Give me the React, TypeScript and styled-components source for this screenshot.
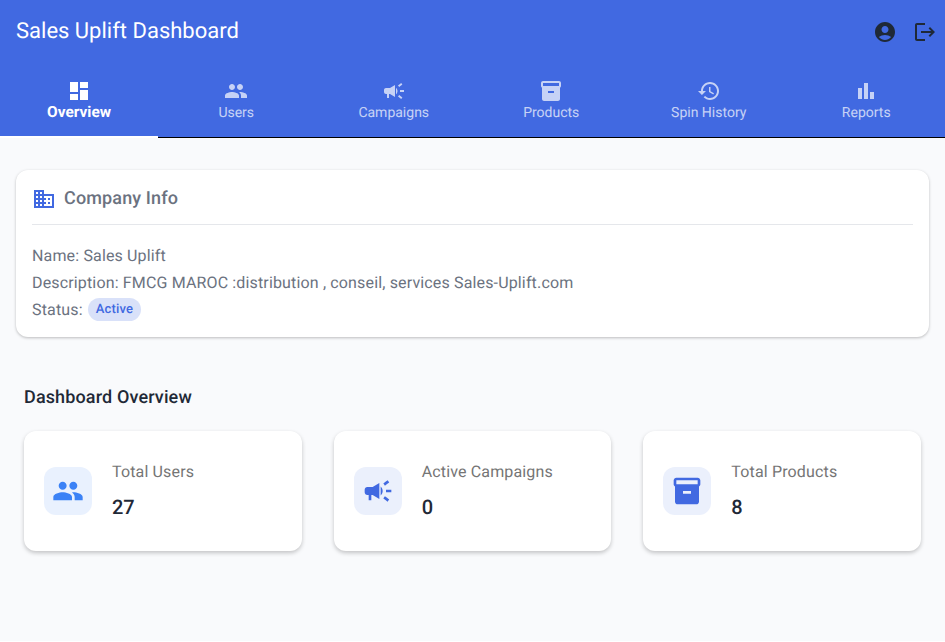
import styled, { createGlobalStyle } from "styled-components"

const GlobalStyle = createGlobalStyle`
  html, body {
    margin: 0;
    padding: 0;
    background: #ffffff;
    font-family: Roboto, "Liberation Sans", sans-serif;
    text-rendering: geometricPrecision;
  }
  * {
    box-sizing: border-box;
  }
`

const Page = styled.div`
  min-height: 641px;
  background: #f9fafc;
`

const Header = styled.header`
  background: #4169e1;
  height: 138px;
  border-bottom: 1px solid #000;
`

const TopBar = styled.div`
  height: 64px;
  padding: 0 8px 0 16px;
  display: flex;
  align-items: center;
  justify-content: space-between;
`

const Title = styled.h1`
  margin: 0;
  color: #fff;
  font-size: 22px;
  font-weight: 400;
  line-height: 1.2;
`

const TopActions = styled.div`
  display: flex;
  gap: 16px;
`

const ActionIcon = styled.svg`
  width: 24px;
  height: 24px;
  fill: #1f2937;
  display: block;
`

const Tabs = styled.nav`
  display: grid;
  grid-template-columns: repeat(6, 1fr);
  height: 73px;
`

const Tab = styled.div<{ $active?: boolean }>`
  height: 74px;
  padding-top: 15px;
  display: flex;
  flex-direction: column;
  align-items: center;
  color: #fff;
  border-bottom: 2px solid ${({ $active }) => ($active ? "#fff" : "transparent")};
  position: relative;
  z-index: 1;

  & > * {
    opacity: ${({ $active }) => ($active ? 1 : 0.7)};
  }
`

const TabIcon = styled.svg`
  width: 24px;
  height: 24px;
  fill: currentColor;
  display: block;
`

const TabLabel = styled.span<{ $active?: boolean }>`
  font-size: 14px;
  line-height: 20px;
  font-weight: ${({ $active }) => ($active ? 700 : 400)};
  transform: ${({ $active }) => ($active ? "scale(1.1)" : "none")};
`

const Content = styled.main`
  padding: 32px 16px 0;
`

const InfoCard = styled.section`
  background: #fff;
  border-radius: 12px;
  padding: 16px;
  height: 167px;
  box-shadow: 0 1px 3px rgba(0, 0, 0, 0.25);
`

const InfoHeading = styled.div`
  display: flex;
  align-items: center;
  gap: 8px;
  height: 39px;
  padding-bottom: 12px;
  border-bottom: 1px solid #e5e7eb;
`

const InfoIcon = styled.svg`
  width: 24px;
  height: 24px;
  fill: #4169e1;
`

const InfoTitle = styled.h2`
  margin: 0;
  font-size: 18px;
  font-weight: 500;
  line-height: 24px;
  letter-spacing: 0.135px;
  color: #6b7280;
`

const InfoBody = styled.div`
  padding-top: 17px;
  font-size: 16px;
  line-height: 27px;
  letter-spacing: 0.15px;
  color: #6b7280;
`

const Line = styled.div`
  height: 27px;
  display: flex;
  align-items: center;
  white-space: pre;
`

const Chip = styled.span`
  margin-left: 5px;
  height: 23px;
  padding: 0 8px;
  border-radius: 12px;
  background: rgba(65, 105, 225, 0.2);
  color: #4169e1;
  font-size: 13px;
  font-weight: 500;
  letter-spacing: 0.2px;
  display: inline-flex;
  align-items: center;
`

const Overview = styled.section`
  padding: 49px 8px 0;
`

const OverviewTitle = styled.h2`
  margin: 0 0 21px;
  font-size: 18px;
  font-weight: 500;
  line-height: 24px;
  letter-spacing: 0.135px;
  color: #1f2937;
`

const StatGrid = styled.div`
  display: grid;
  grid-template-columns: repeat(3, 1fr);
  gap: 32px;
`

const StatCard = styled.div`
  height: 120px;
  background: #fff;
  border-radius: 12px;
  padding: 0 20px;
  display: flex;
  align-items: center;
  gap: 20px;
  box-shadow: 0 2px 4px rgba(0, 0, 0, 0.22);
`

const StatBadge = styled.div<{ $color: string; $bg: string }>`
  width: 48px;
  height: 48px;
  border-radius: 12px;
  background: ${({ $bg }) => $bg};
  color: ${({ $color }) => $color};
  display: flex;
  align-items: center;
  justify-content: center;
`

const StatIcon = styled.svg`
  width: 32px;
  height: 32px;
  fill: currentColor;
`

const StatText = styled.div`
  display: flex;
  flex-direction: column;
  gap: 12px;
`

const StatLabel = styled.span`
  font-size: 16px;
  line-height: 20px;
  letter-spacing: 0.15px;
  color: #757575;
`

const StatValue = styled.span`
  font-size: 20px;
  font-weight: 500;
  line-height: 26px;
  color: #1f2937;
`

const paths = {
  dashboard: "M3 13h8V3H3v10zm0 8h8v-6H3v6zm10 0h8V11h-8v10zm0-18v6h8V3h-8z",
  people:
    "M16 11c1.66 0 2.99-1.34 2.99-3S17.66 5 16 5c-1.66 0-3 1.34-3 3s1.34 3 3 3zm-8 0c1.66 0 2.99-1.34 2.99-3S9.66 5 8 5C6.34 5 5 6.34 5 8s1.34 3 3 3zm0 2c-2.33 0-7 1.17-7 3.5V19h14v-2.5c0-2.33-4.67-3.5-7-3.5zm8 0c-.29 0-.62.02-.97.05 1.16.84 1.97 1.97 1.97 3.45V19h6v-2.5c0-2.33-4.67-3.5-7-3.5z",
  campaign:
    "M18 11v2h4v-2h-4zm-2 6.61c.96.71 2.21 1.65 3.2 2.39.4-.53.8-1.07 1.2-1.6-.99-.74-2.24-1.68-3.2-2.4-.4.54-.8 1.08-1.2 1.61zM20.4 5.6c-.4-.53-.8-1.07-1.2-1.6-.99.74-2.24 1.68-3.2 2.4.4.53.8 1.07 1.2 1.6.96-.72 2.21-1.65 3.2-2.4zM4 9c-1.1 0-2 .9-2 2v2c0 1.1.9 2 2 2h1v4h2v-4h1l5 3V6L8 9H4zm11.5 3c0-1.33-.58-2.53-1.5-3.35v6.69c.92-.81 1.5-2.01 1.5-3.34z",
  inventory:
    "M20 2H4c-1 0-2 .9-2 2v3.01c0 .72.43 1.34 1 1.69V20c0 1.1 1.1 2 2 2h14c.9 0 2-.9 2-2V8.7c.57-.35 1-.97 1-1.69V4c0-1.1-1-2-2-2zm-5 12H9v-2h6v2zm5-7H4V4l16-.02V7z",
  history:
    "M13 3c-4.97 0-9 4.03-9 9H1l3.89 3.89.07.14L9 12H6c0-3.87 3.13-7 7-7s7 3.13 7 7-3.13 7-7 7c-1.93 0-3.68-.79-4.94-2.06l-1.42 1.42C8.27 19.99 10.51 21 13 21c4.97 0 9-4.03 9-9s-4.03-9-9-9zm-1 5v5l4.28 2.54.72-1.21-3.5-2.08V8H12z",
  bar: "M4 9h4v11H4zm12 4h4v7h-4zm-6-9h4v16h-4z",
  account:
    "M12 2C6.48 2 2 6.48 2 12s4.48 10 10 10 10-4.48 10-10S17.52 2 12 2zm0 4c1.93 0 3.5 1.57 3.5 3.5S13.93 13 12 13s-3.5-1.57-3.5-3.5S10.07 6 12 6zm0 14c-2.03 0-4.43-.82-6.14-2.88C7.55 15.8 9.68 15 12 15s4.45.8 6.14 2.12C16.43 19.18 14.03 20 12 20z",
  logout:
    "M17 7l-1.41 1.41L18.17 11H8v2h10.17l-2.58 2.58L17 17l5-5zM4 5h8V3H4c-1.1 0-2 .9-2 2v14c0 1.1.9 2 2 2h8v-2H4V5z",
  business:
    "M12 7V3H2v18h20V7H12zM6 19H4v-2h2v2zm0-4H4v-2h2v2zm0-4H4V9h2v2zm0-4H4V5h2v2zm4 12H8v-2h2v2zm0-4H8v-2h2v2zm0-4H8V9h2v2zm0-4H8V5h2v2zm10 12h-8v-2h2v-2h-2v-2h2v-2h-2V9h8v10zm-2-8h-2v2h2v-2zm0 4h-2v2h2v-2z",
}

const tabs = [
  { label: "Overview", icon: paths.dashboard, active: true },
  { label: "Users", icon: paths.people },
  { label: "Campaigns", icon: paths.campaign },
  { label: "Products", icon: paths.inventory },
  { label: "Spin History", icon: paths.history },
  { label: "Reports", icon: paths.bar },
]

const stats = [
  { label: "Total Users", value: "27", icon: paths.people, color: "#3b82f6", bg: "#e9f1fe" },
  { label: "Active Campaigns", value: "0", icon: paths.campaign, color: "#4169e1", bg: "#ebf0fc" },
  { label: "Total Products", value: "8", icon: paths.inventory, color: "#4169e1", bg: "#ebf0fc" },
]

function App() {
  return (
    <Page>
      <GlobalStyle />
      <Header>
        <TopBar>
          <Title>Sales Uplift Dashboard</Title>
          <TopActions>
            <ActionIcon viewBox="0 0 24 24"><path d={paths.account} /></ActionIcon>
            <ActionIcon viewBox="0 0 24 24"><path d={paths.logout} /></ActionIcon>
          </TopActions>
        </TopBar>
        <Tabs>
          {tabs.map((tab) => (
            <Tab key={tab.label} $active={tab.active}>
              <TabIcon viewBox="0 0 24 24"><path d={tab.icon} /></TabIcon>
              <TabLabel $active={tab.active}>{tab.label}</TabLabel>
            </Tab>
          ))}
        </Tabs>
      </Header>
      <Content>
        <InfoCard>
          <InfoHeading>
            <InfoIcon viewBox="0 0 24 24"><path d={paths.business} /></InfoIcon>
            <InfoTitle>Company Info</InfoTitle>
          </InfoHeading>
          <InfoBody>
            <Line>Name: Sales Uplift</Line>
            <Line>Description: FMCG MAROC :distribution , conseil, services Sales-Uplift.com</Line>
            <Line>Status:<Chip>Active</Chip></Line>
          </InfoBody>
        </InfoCard>
        <Overview>
          <OverviewTitle>Dashboard Overview</OverviewTitle>
          <StatGrid>
            {stats.map((stat) => (
              <StatCard key={stat.label}>
                <StatBadge $color={stat.color} $bg={stat.bg}>
                  <StatIcon viewBox="0 0 24 24"><path d={stat.icon} /></StatIcon>
                </StatBadge>
                <StatText>
                  <StatLabel>{stat.label}</StatLabel>
                  <StatValue>{stat.value}</StatValue>
                </StatText>
              </StatCard>
            ))}
          </StatGrid>
        </Overview>
      </Content>
    </Page>
  )
}

export default App
